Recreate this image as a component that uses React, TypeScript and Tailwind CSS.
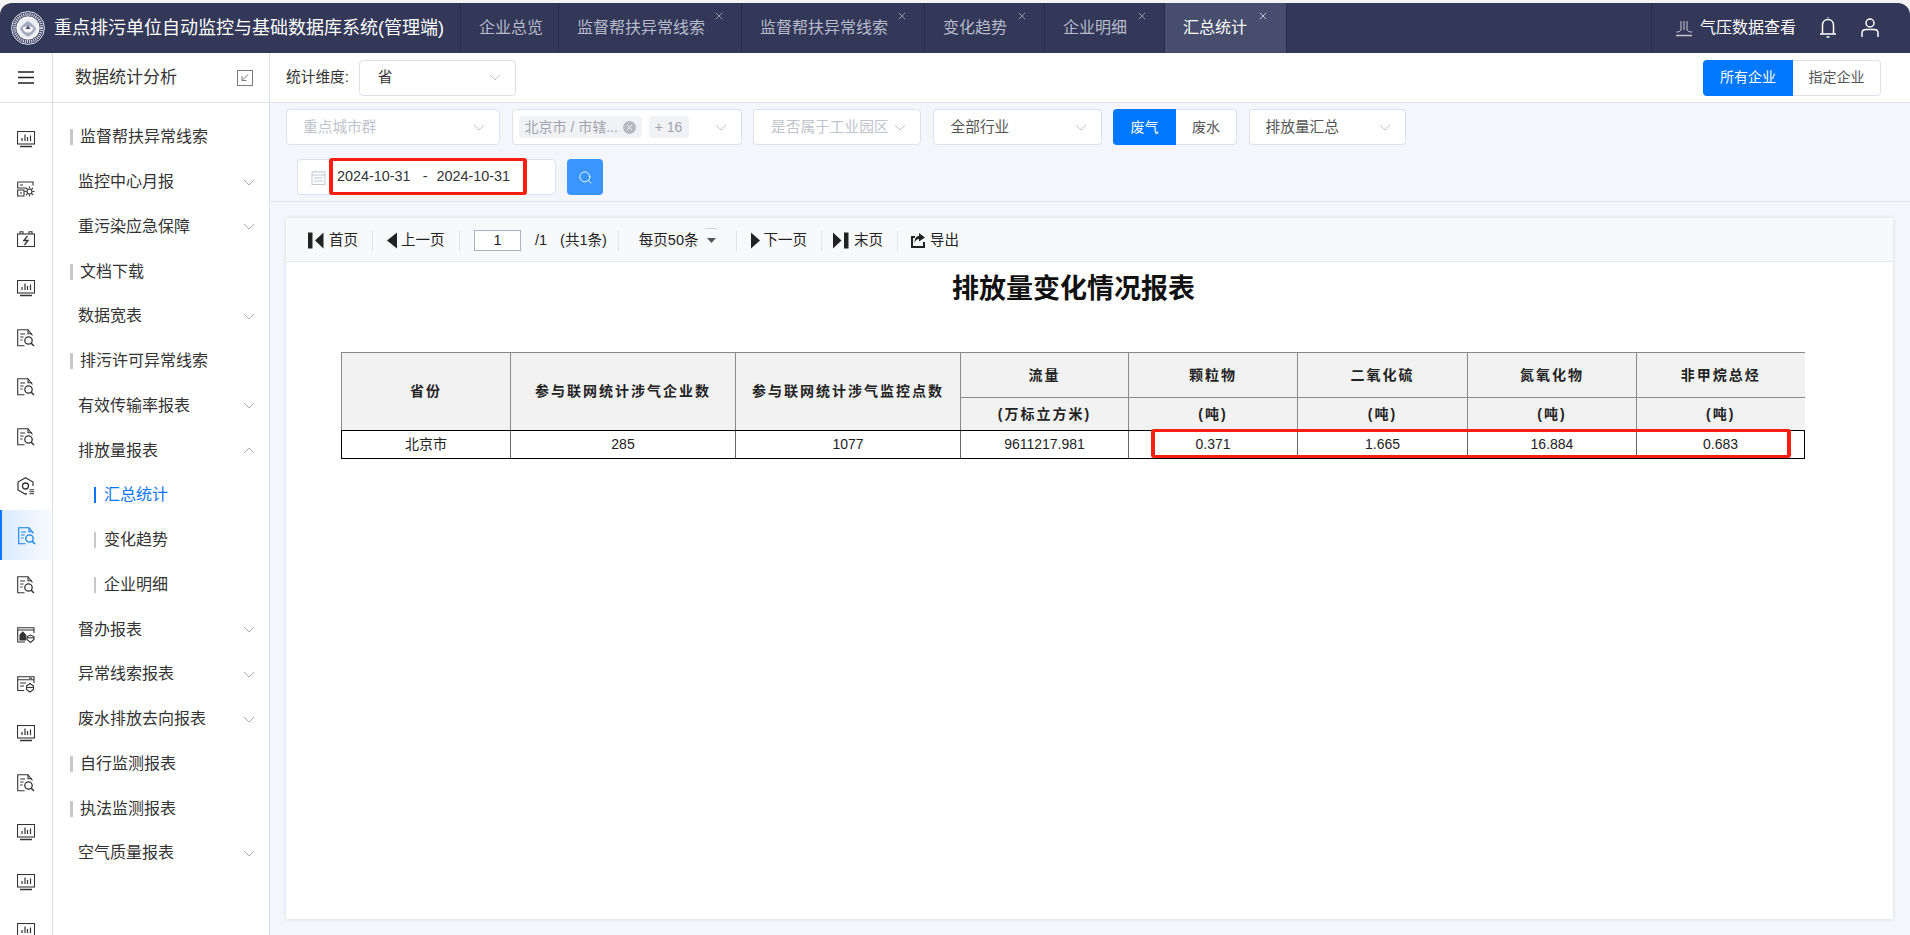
import { Search, X } from 'lucide-react'
import type { ReactNode } from 'react'

const Chevron = ({ up = false, className = '' }: { up?: boolean; className?: string }) => (
  <svg width="12" height="7" viewBox="0 0 12 7" fill="none" className={className}>
    <path d={up ? 'M1 6L6 1L11 6' : 'M1 1L6 6L11 1'} stroke="currentColor" strokeWidth="1" />
  </svg>
)

// rail icons
const Monitor = () => (
  <svg width="18" height="17" viewBox="0 0 18 17" fill="none" stroke="currentColor" strokeWidth="1.1">
    <rect x="0.5" y="0.5" width="17" height="12.5" />
    <path d="M5 10V7M8 10V3.5M10.5 10V6M13.5 10V4.5" strokeWidth="1.2" />
    <path d="M3 15.5H15" strokeWidth="1.5" />
  </svg>
)
const DocSearch = () => (
  <svg width="18" height="18" viewBox="0 0 18 18" fill="none" stroke="currentColor" strokeWidth="1.1">
    <path d="M15.5 6.5L11 0.7H0.7V16.8H7.5" />
    <path d="M11 0.7V4.8H15M3.2 5H8M3.2 8H6.5M3.2 11H5.5" />
    <circle cx="11.5" cy="11.5" r="3.7" strokeWidth="1.3" />
    <path d="M14.2 14.2L17 17" strokeWidth="1.5" />
  </svg>
)
const CardGear = () => (
  <svg width="18" height="16" viewBox="0 0 18 16" fill="none" stroke="currentColor" strokeWidth="1.1">
    <path d="M0.7 1H16V4.5M0.7 1V7H9M3 4H6" />
    <path d="M0.7 9H7V15H0.7ZM3 12H5" />
    <circle cx="12.5" cy="10.5" r="2.5" />
    <path d="M12.5 5.5V7.5M12.5 13.5V15.5M7.5 10.5H9.5M15.5 10.5H17.5M9 7L10.4 8.4M14.6 12.6L16 14M16 7L14.6 8.4M10.4 12.6L9 14" />
  </svg>
)
const Battery = () => (
  <svg width="18" height="16" viewBox="0 0 18 16" fill="none" stroke="currentColor" strokeWidth="1.1">
    <rect x="0.5" y="3" width="17" height="12.5" />
    <path d="M3 3V0.7H6V3M12 3V0.7H15V3" />
    <path d="M10.5 5L6.8 9.5H11L7.5 14" strokeWidth="1.3" />
  </svg>
)
const HexSearch = () => (
  <svg width="18" height="18" viewBox="0 0 18 18" fill="none" stroke="currentColor" strokeWidth="1.2">
    <path d="M16 9V5L8.5 0.8L1 5V13L8.5 17.2L10 16.4" />
    <circle cx="8.5" cy="9" r="3" strokeWidth="1.3" />
    <path d="M12.5 12.8H17M12.5 14.8H17M12.5 16.8H17" strokeWidth="1.1" />
  </svg>
)
const CardHouse = () => (
  <svg width="18" height="16" viewBox="0 0 18 16" fill="none" stroke="currentColor" strokeWidth="1.1">
    <path d="M17 6V0.7H0.7V15H8M0.7 3H17" />
    <path d="M3 8L5.8 5L8.6 8V13H3Z" fill="currentColor" />
    <path d="M10 9.5L13.5 8L17 9.5V12.5L13.5 15.5L10 12.5Z" />
    <path d="M10 10.8H17" />
  </svg>
)
const CardShield = () => (
  <svg width="18" height="17" viewBox="0 0 18 17" fill="none" stroke="currentColor" strokeWidth="1.1">
    <path d="M17 7V0.7H0.7V14.5H7M0.7 3.8H17M12 2.2H15M3 7H9M3 10H7" />
    <path d="M9.5 10L13 7.5L16.5 10V13.5L13 16L9.5 13.5Z" />
    <path d="M9.5 11.5H16.5" />
  </svg>
)

const railIcons = [
  Monitor, CardGear, Battery, Monitor, DocSearch, DocSearch, DocSearch, HexSearch, DocSearch,
  DocSearch, CardHouse, CardShield, Monitor, DocSearch, Monitor, Monitor, Monitor,
]

type MenuEntry = { label: string; kind: 'bar' | 'group' | 'open' | 'subActive' | 'sub' }

const menu: MenuEntry[] = [
  { label: '监督帮扶异常线索', kind: 'bar' },
  { label: '监控中心月报', kind: 'group' },
  { label: '重污染应急保障', kind: 'group' },
  { label: '文档下载', kind: 'bar' },
  { label: '数据宽表', kind: 'group' },
  { label: '排污许可异常线索', kind: 'bar' },
  { label: '有效传输率报表', kind: 'group' },
  { label: '排放量报表', kind: 'open' },
  { label: '汇总统计', kind: 'subActive' },
  { label: '变化趋势', kind: 'sub' },
  { label: '企业明细', kind: 'sub' },
  { label: '督办报表', kind: 'group' },
  { label: '异常线索报表', kind: 'group' },
  { label: '废水排放去向报表', kind: 'group' },
  { label: '自行监测报表', kind: 'bar' },
  { label: '执法监测报表', kind: 'bar' },
  { label: '空气质量报表', kind: 'group' },
]

const tabs = [
  { label: '企业总览' },
  { label: '监督帮扶异常线索', close: true, wide: true },
  { label: '监督帮扶异常线索', close: true, wide: true },
  { label: '变化趋势', close: true },
  { label: '企业明细', close: true },
  { label: '汇总统计', close: true, active: true },
]

const Logo = () => (
  <svg width="34" height="34" viewBox="0 0 34 34" fill="none" className="shrink-0">
    <circle cx="17" cy="17" r="16.4" stroke="#e8eaf0" strokeWidth="1" />
    <circle cx="17" cy="17" r="13.6" stroke="#d5d8e2" strokeWidth="3" strokeDasharray="1.2 0.9" />
    <circle cx="17" cy="17" r="11.2" stroke="#fff" strokeWidth="1" fill="#eceef3" />
    <path d="M9 17L13 13L17 10L21 13L25 17C24 21 20 24.5 17 25.5C14 24.5 10 21 9 17Z" fill="#a4a9bb" />
    <path d="M11.5 16.5C13 15 21 15 22.5 16.5L21 20C19 22 15 22 13 20Z" fill="#f3f4f8" />
    <path d="M14.5 18L17 14.5L19.5 18Z" fill="#4a4f6e" />
  </svg>
)

const Select = ({ width, children, pad = 'pl-[17px]' }: { width: string; children: ReactNode; pad?: string }) => (
  <div className={`${width} ${pad} h-[36px] shrink-0 bg-white border border-[#dfe1ea] rounded-[4px] flex items-center justify-between pr-[14px]`}>
    {children}
    <Chevron className="text-[#c4c7d2] shrink-0" />
  </div>
)

const Sep = ({ className = '' }: { className?: string }) => <span className={`w-px h-[20px] bg-[#e2e4ea] shrink-0 ${className}`} />

const Glyph = ({ d }: { d: string }) => (
  <svg width="16" height="17" viewBox="0 0 16 17" fill="#222">
    <path d={d} />
  </svg>
)

export default function App() {
  return (
    <div className="h-screen w-full overflow-hidden bg-[#f3f3f5] pt-[3px] flex flex-col text-[#333] [font-family:'Liberation_Sans','Noto_Sans_CJK_SC',sans-serif]">
      {/* Header */}
      <header className="h-[50px] shrink-0 flex bg-[#333858] rounded-t-[12px] overflow-hidden">
        <div className="w-[461px] shrink-0 flex items-center pl-[11px] gap-[9px] border-r border-[#282d4b]">
          <Logo />
          <span className="text-[18px] text-white whitespace-nowrap">重点排污单位自动监控与基础数据库系统(管理端)</span>
        </div>
        {tabs.map((t, i) => (
          <div
            key={i}
            className={`relative flex items-center pl-[18px] border-r border-[#282d4b] text-[16px] whitespace-nowrap ${t.active ? 'pr-[39px]' : t.wide ? 'pr-[36px]' : t.close ? 'pr-[37px]' : 'pr-[15px]'} ${t.active ? 'bg-[#474d6d] text-white' : 'text-[#b7bbca]'}`}
          >
            {t.label}
            {t.close && (
              <X size={12} strokeWidth={1.3} className={`absolute top-[7px] ${t.active ? 'right-[17px] text-white' : 'right-[16px] text-[#c4c8d4]'}`} />
            )}
          </div>
        ))}
        <div className="flex-1" />
        <div className="w-[259px] shrink-0 border-l border-[#282d4b] flex items-center pl-[23px] text-white">
          <svg width="18" height="18" viewBox="0 0 18 18" fill="none" stroke="#c5c8d6" strokeWidth="1">
            <path d="M6 2V10C6 12 4.5 13 1.5 13M12 2V10C12 12 13.5 13 17 13M9 2V11" />
            <path d="M1 16.5H17" strokeWidth="1.6" />
          </svg>
          <span className="ml-[7px] text-[16px] whitespace-nowrap">气压数据查看</span>
          <svg width="18" height="22" viewBox="0 0 18 22" fill="none" stroke="#fff" strokeWidth="1.5" className="ml-[23px]">
            <path d="M1 17H17M3.5 17V8C3.5 4.5 6 2.5 9 2.5C12 2.5 14.5 4.5 14.5 8V17M8.5 0.5H9.5M7.5 20H10.5" />
          </svg>
          <svg width="18" height="20" viewBox="0 0 18 20" fill="none" stroke="#fff" strokeWidth="1.5" className="ml-[24px]">
            <circle cx="9" cy="5" r="4" />
            <path d="M1 19V15C1 12.5 3 11.5 5 11.5H13C15 11.5 17 12.5 17 15V19" />
          </svg>
        </div>
      </header>

      <div className="flex-1 min-h-0 flex bg-[#f5f6fb]">
        {/* Icon rail */}
        <aside className="w-[53px] shrink-0 bg-white border-r border-[#dfe1ea] flex flex-col overflow-hidden">
          <div className="h-[50px] shrink-0 border-b border-[#dfe1ea] flex items-center justify-center">
            <svg width="16" height="13" viewBox="0 0 16 13" stroke="#222" strokeWidth="1.5">
              <path d="M0 1H16M0 6.5H16M0 12H16" />
            </svg>
          </div>
          <div className="pt-[11px] shrink-0">
            {railIcons.map((Icon, i) => (
              <div
                key={i}
                className={`h-[49.5px] pt-[2px] flex items-center justify-center ${i === 8 ? 'border-l-2 border-[#0a76f5] bg-gradient-to-r from-[#dcebff] to-[#f6faff] text-[#1080f0]' : 'text-[#333]'}`}
              >
                <Icon />
              </div>
            ))}
          </div>
        </aside>

        {/* Menu */}
        <nav className="w-[217px] shrink-0 bg-white border-r border-[#dfe1ea] flex flex-col">
          <div className="h-[50px] shrink-0 border-b border-[#dfe1ea] flex items-center pl-[22px] pr-[16px] pt-[1px] justify-between">
            <span className="text-[17px] text-[#333]">数据统计分析</span>
            <svg width="16" height="16" viewBox="0 0 16 16" fill="none" stroke="#777a84" strokeWidth="1">
              <rect x="0.5" y="0.5" width="15" height="15" />
              <path d="M11 4.5L5 10.5M5 6V10.5H9.5" />
            </svg>
          </div>
          <div className="pt-[12px] text-[16px]">
            {menu.map((m, i) => (
              <div key={i} className="h-[44.75px] flex items-center pr-[14px] whitespace-nowrap">
                {m.kind === 'bar' && (
                  <>
                    <span className="ml-[17px] w-[3px] h-[16px] bg-[#c8c8c8]" />
                    <span className="ml-[7px]">{m.label}</span>
                  </>
                )}
                {(m.kind === 'group' || m.kind === 'open') && (
                  <>
                    <span className="ml-[25px] flex-1">{m.label}</span>
                    <Chevron up={m.kind === 'open'} className="text-[#a9acb6]" />
                  </>
                )}
                {(m.kind === 'sub' || m.kind === 'subActive') && (
                  <>
                    <span className={`ml-[41px] w-[2px] h-[16px] ${m.kind === 'subActive' ? 'bg-[#0a76f5]' : 'bg-[#c8c8c8]'}`} />
                    <span className={`ml-[8px] ${m.kind === 'subActive' ? 'text-[#0a76f5]' : ''}`}>{m.label}</span>
                  </>
                )}
              </div>
            ))}
          </div>
        </nav>

        {/* Main */}
        <main className="flex-1 min-w-0 flex flex-col">
          <div className="h-[50px] shrink-0 bg-white border-b border-[#dfe1ea] flex items-center pl-[16px] pr-[29px]">
            <span className="text-[14.7px] text-[#333] mr-[10px] whitespace-nowrap">统计维度:</span>
            <Select width="w-[157px]" pad="pl-[18px]"><span className="text-[14.7px]">省</span></Select>
            <div className="ml-auto flex h-[36px] text-[14px]">
              <div className="w-[90px] bg-[#0077ff] text-white rounded-l-[4px] flex items-center justify-center">所有企业</div>
              <div className="w-[88px] bg-white border border-l-0 border-[#dfe1ea] rounded-r-[4px] flex items-center justify-center text-[#555]">指定企业</div>
            </div>
          </div>

          <div className="h-[99px] shrink-0 border-b border-[#dfe1ea] pt-[6px]">
            <div className="flex gap-[11.5px] pl-[16px] text-[14.7px]">
              <Select width="w-[214px]" pad="pl-[16px]"><span className="text-[#c0c4cc]">重点城市群</span></Select>
              <Select width="w-[230px]" pad="pl-[6px]">
                <div className="flex items-center gap-[7px] text-[14px] text-[#a0a3ad]">
                  <span className="h-[22px] w-[123px] bg-[#f0f2f5] rounded-[4px] flex items-center pl-[6px] gap-[5px] whitespace-nowrap">
                    北京市 / 市辖...
                    <span className="w-[13px] h-[13px] rounded-full bg-[#b6b9c2] flex items-center justify-center shrink-0">
                      <X size={9} strokeWidth={2} className="text-white" />
                    </span>
                  </span>
                  <span className="h-[22px] w-[40px] bg-[#f0f2f5] rounded-[4px] flex items-center justify-center">+ 16</span>
                </div>
              </Select>
              <Select width="w-[168px]"><span className="text-[#c0c4cc] whitespace-nowrap">是否属于工业园区</span></Select>
              <Select width="w-[169px]"><span className="text-[#555]">全部行业</span></Select>
              <div className="w-[124px] h-[36px] shrink-0 flex text-[14px]">
                <div className="w-[63px] bg-[#0077ff] text-white rounded-l-[4px] flex items-center justify-center">废气</div>
                <div className="flex-1 bg-white border border-l-0 border-[#dfe1ea] rounded-r-[4px] flex items-center justify-center text-[#555]">废水</div>
              </div>
              <Select width="w-[157px]" pad="pl-[16px]"><span className="text-[#555] text-[14.7px]">排放量汇总</span></Select>
            </div>
            <div className="flex gap-[11px] pl-[27px] mt-[14px]">
              <div className="relative w-[259px] h-[36px] bg-white border border-[#dfe1ea] rounded-[4px] flex items-center pl-[13px] text-[14.4px] text-[#333] whitespace-nowrap">
                <svg width="15" height="15" viewBox="0 0 15 15" fill="none" stroke="#c4c7d2" strokeWidth="1">
                  <rect x="1" y="2" width="13" height="12.5" />
                  <path d="M1 5H14M3 8H12M3 11H12M4 0.5V2M11 0.5V2" />
                </svg>
                <span className="ml-[11px]">2024-10-31</span>
                <span className="ml-[12px]">-</span>
                <span className="ml-[9px]">2024-10-31</span>
                <div className="absolute left-[31px] top-[-2px] w-[198px] h-[37px] border-x-[4px] border-y-[3px] border-[#f91f10] rounded-[3px]" />
              </div>
              <div className="w-[36px] h-[36px] bg-[#3a96ff] rounded-[4px] flex items-center justify-center">
                <Search size={15} strokeWidth={1.4} className="text-white" />
              </div>
            </div>
          </div>

          <section className="flex-1 min-h-0 ml-[16px] mr-[17px] mt-[16px] mb-[16px] bg-white shadow-[0_0_4px_rgba(0,0,0,0.12)] flex flex-col">
            {/* Report toolbar */}
            <div className="h-[44px] shrink-0 bg-[#f8f9fb] border-b border-[#e4e7ed] flex items-center pt-[2px] pl-[22px] text-[14.5px] text-[#222] whitespace-nowrap">
              <Glyph d="M0 0.5H4.5V16.5H0ZM7 8.5L15.5 0.5V16.5Z" />
              <span className="ml-[5px]">首页</span>
              <Sep className="ml-[14px] mr-[14px]" />
              <svg width="10" height="17" viewBox="0 0 10 17" fill="#222"><path d="M0 8.5L10 0.5V16.5Z" /></svg>
              <span className="ml-[4px]">上一页</span>
              <Sep className="ml-[14px] mr-[14.5px]" />
              <div className="w-[47px] h-[21px] border border-[#a9afc4] bg-white flex items-center justify-center">1</div>
              <span className="ml-[14px]">/1</span>
              <span className="ml-[13px]">(共1条)</span>
              <Sep className="ml-[11px] mr-[20px]" />
              <span>每页50条</span>
              <span className="relative ml-[9px] w-[8px] h-[5px]">
                <svg width="9" height="5" viewBox="0 0 9 5" fill="#555" className="block"><path d="M0 0H9L4.5 5Z" /></svg>
                <span className="absolute left-[-2px] top-[-10px] w-[12px] h-px bg-[#d0d2d8]" />
              </span>
              <Sep className="ml-[21px] mr-[14px]" />
              <svg width="9" height="17" viewBox="0 0 9 17" fill="#222"><path d="M9 8.5L0 0.5V16.5Z" /></svg>
              <span className="ml-[3px]">下一页</span>
              <Sep className="ml-[14px] mr-[11px]" />
              <Glyph d="M0 0.5L8.5 8.5L0 16.5ZM11 0.5H15.5V16.5H11Z" />
              <span className="ml-[5px]">末页</span>
              <Sep className="ml-[14px] mr-[13px]" />
              <svg width="14" height="15" viewBox="0 0 14 15" fill="#222">
                <path d="M0 3H4V5H2V13H12V9H14V15H0Z" />
                <path d="M8 0L14 4.5L8 8.5V6C6 6 4.5 7 3.5 10C3.5 6 5 3.2 8 3Z" />
              </svg>
              <span className="ml-[5px]">导出</span>
            </div>

            <h1 className="h-[54px] shrink-0 flex items-center justify-center pr-[32px] text-[27px] font-bold text-[#111]">排放量变化情况报表</h1>

            <div className="relative mt-[36px] ml-[55px] w-[1463px]">
              <table className="table-fixed w-[1463px] border-collapse text-[14px] text-center text-[#222]">
                <colgroup>
                  <col className="w-[169px]" />
                  <col className="w-[225px]" />
                  <col className="w-[225px]" />
                  <col className="w-[168px]" />
                  <col className="w-[169px]" />
                  <col className="w-[170px]" />
                  <col className="w-[169px]" />
                  <col className="w-[168px]" />
                </colgroup>
                <thead className="bg-[#f2f2f2] font-bold tracking-[2px] text-[#222]">
                  <tr className="h-[45px]">
                    <th rowSpan={2} className="border border-[#8a8a8a] border-b-black">省份</th>
                    <th rowSpan={2} className="border border-[#8a8a8a] border-b-black">参与联网统计涉气企业数</th>
                    <th rowSpan={2} className="border border-[#8a8a8a] border-b-black">参与联网统计涉气监控点数</th>
                    <th className="border border-[#8a8a8a]">流量</th>
                    <th className="border border-[#8a8a8a]">颗粒物</th>
                    <th className="border border-[#8a8a8a]">二氧化硫</th>
                    <th className="border border-[#8a8a8a]">氮氧化物</th>
                    <th className="border border-[#8a8a8a] border-r-0">非甲烷总烃</th>
                  </tr>
                  <tr className="h-[33px]">
                    <th className="border border-[#8a8a8a] border-b-black">(万标立方米)</th>
                    <th className="border border-[#8a8a8a] border-b-black">(吨)</th>
                    <th className="border border-[#8a8a8a] border-b-black">(吨)</th>
                    <th className="border border-[#8a8a8a] border-b-black">(吨)</th>
                    <th className="border border-[#8a8a8a] border-r-0 border-b-black">(吨)</th>
                  </tr>
                </thead>
                <tbody>
                  <tr className="h-[28px]">
                    <td className="border border-black border-r-[#666]">北京市</td>
                    <td className="border border-black border-r-[#666]">285</td>
                    <td className="border border-black border-r-[#666]">1077</td>
                    <td className="border border-black border-r-[#666]">9611217.981</td>
                    <td className="border border-black border-r-[#666]">0.371</td>
                    <td className="border border-black border-r-[#666]">1.665</td>
                    <td className="border border-black border-r-[#666]">16.884</td>
                    <td className="border border-black">0.683</td>
                  </tr>
                </tbody>
              </table>
              <div className="absolute left-[810px] top-[77px] w-[640px] h-[29px] border-x-[4px] border-y-[3px] border-[#f91f10] rounded-[3px]" />
            </div>
          </section>
        </main>
      </div>
    </div>
  )
}
